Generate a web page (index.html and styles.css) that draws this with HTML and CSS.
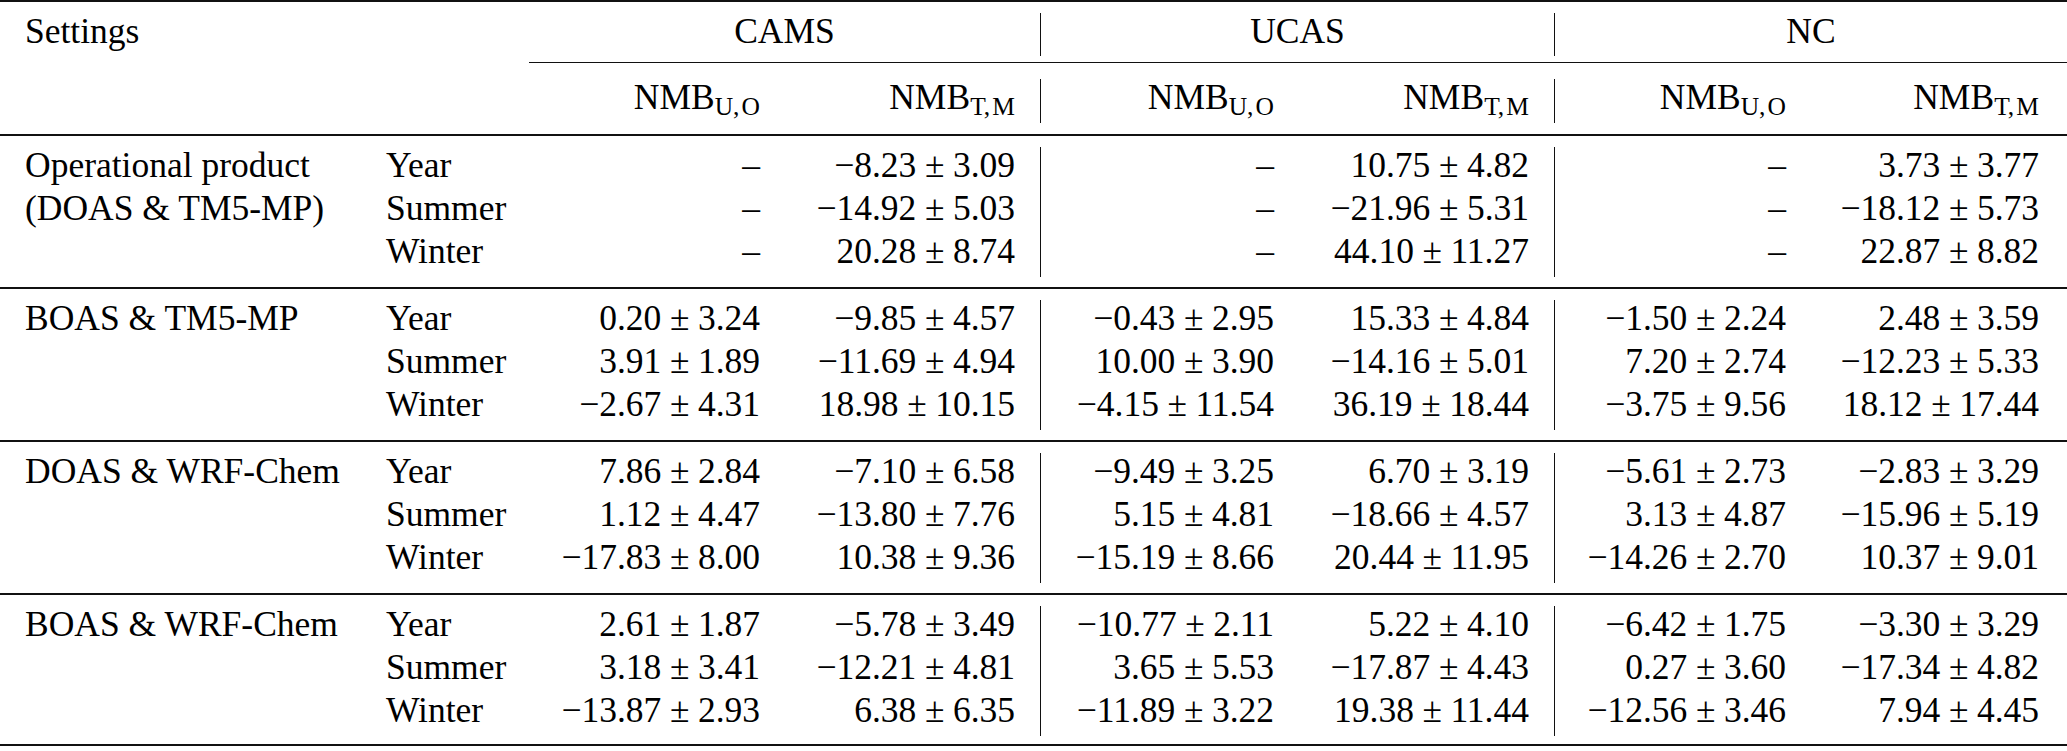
FILE: index.html
```html
<!DOCTYPE html>
<html lang="en">
<head>
<meta charset="utf-8">
<title>NMB table</title>
<link rel="stylesheet" href="styles.css">
</head>
<body>
<div class="tbl">
  <div class="head">
    <div class="grid grp">
      <div class="cell lab">Settings</div>
      <div class="cell"></div>
      <div class="cell span2 ctr vr">CAMS</div>
      <div class="cell span2 ctr vr">UCAS</div>
      <div class="cell span2 ctr">NC</div>
    </div>
    <div class="cmid"></div>
    <div class="grid sub-row rows">
      <div class="cell"></div>
      <div class="cell"></div>
      <div class="cell">NMB<sub>U,&#8202;O</sub></div>
      <div class="cell">NMB<sub>T,&#8202;M</sub></div>
      <div class="cell">NMB<sub>U,&#8202;O</sub></div>
      <div class="cell">NMB<sub>T,&#8202;M</sub></div>
      <div class="cell">NMB<sub>U,&#8202;O</sub></div>
      <div class="cell">NMB<sub>T,&#8202;M</sub></div>
    </div>
  </div>

  <div class="grid sec rows">
    <div class="cell">Operational product</div><div class="cell">Year</div>
    <div class="cell">–</div><div class="cell">−8.23<span class="pm">±</span>3.09</div>
    <div class="cell">–</div><div class="cell">10.75<span class="pm">±</span>4.82</div>
    <div class="cell">–</div><div class="cell">3.73<span class="pm">±</span>3.77</div>

    <div class="cell">(DOAS &amp; TM5-MP)</div><div class="cell">Summer</div>
    <div class="cell">–</div><div class="cell">−14.92<span class="pm">±</span>5.03</div>
    <div class="cell">–</div><div class="cell">−21.96<span class="pm">±</span>5.31</div>
    <div class="cell">–</div><div class="cell">−18.12<span class="pm">±</span>5.73</div>

    <div class="cell"></div><div class="cell">Winter</div>
    <div class="cell">–</div><div class="cell">20.28<span class="pm">±</span>8.74</div>
    <div class="cell">–</div><div class="cell">44.10<span class="pm">±</span>11.27</div>
    <div class="cell">–</div><div class="cell">22.87<span class="pm">±</span>8.82</div>
  </div>

  <div class="grid sec rows">
    <div class="cell">BOAS &amp; TM5-MP</div><div class="cell">Year</div>
    <div class="cell">0.20<span class="pm">±</span>3.24</div><div class="cell">−9.85<span class="pm">±</span>4.57</div>
    <div class="cell">−0.43<span class="pm">±</span>2.95</div><div class="cell">15.33<span class="pm">±</span>4.84</div>
    <div class="cell">−1.50<span class="pm">±</span>2.24</div><div class="cell">2.48<span class="pm">±</span>3.59</div>

    <div class="cell"></div><div class="cell">Summer</div>
    <div class="cell">3.91<span class="pm">±</span>1.89</div><div class="cell">−11.69<span class="pm">±</span>4.94</div>
    <div class="cell">10.00<span class="pm">±</span>3.90</div><div class="cell">−14.16<span class="pm">±</span>5.01</div>
    <div class="cell">7.20<span class="pm">±</span>2.74</div><div class="cell">−12.23<span class="pm">±</span>5.33</div>

    <div class="cell"></div><div class="cell">Winter</div>
    <div class="cell">−2.67<span class="pm">±</span>4.31</div><div class="cell">18.98<span class="pm">±</span>10.15</div>
    <div class="cell">−4.15<span class="pm">±</span>11.54</div><div class="cell">36.19<span class="pm">±</span>18.44</div>
    <div class="cell">−3.75<span class="pm">±</span>9.56</div><div class="cell">18.12<span class="pm">±</span>17.44</div>
  </div>

  <div class="grid sec rows">
    <div class="cell">DOAS &amp; WRF-Chem</div><div class="cell">Year</div>
    <div class="cell">7.86<span class="pm">±</span>2.84</div><div class="cell">−7.10<span class="pm">±</span>6.58</div>
    <div class="cell">−9.49<span class="pm">±</span>3.25</div><div class="cell">6.70<span class="pm">±</span>3.19</div>
    <div class="cell">−5.61<span class="pm">±</span>2.73</div><div class="cell">−2.83<span class="pm">±</span>3.29</div>

    <div class="cell"></div><div class="cell">Summer</div>
    <div class="cell">1.12<span class="pm">±</span>4.47</div><div class="cell">−13.80<span class="pm">±</span>7.76</div>
    <div class="cell">5.15<span class="pm">±</span>4.81</div><div class="cell">−18.66<span class="pm">±</span>4.57</div>
    <div class="cell">3.13<span class="pm">±</span>4.87</div><div class="cell">−15.96<span class="pm">±</span>5.19</div>

    <div class="cell"></div><div class="cell">Winter</div>
    <div class="cell">−17.83<span class="pm">±</span>8.00</div><div class="cell">10.38<span class="pm">±</span>9.36</div>
    <div class="cell">−15.19<span class="pm">±</span>8.66</div><div class="cell">20.44<span class="pm">±</span>11.95</div>
    <div class="cell">−14.26<span class="pm">±</span>2.70</div><div class="cell">10.37<span class="pm">±</span>9.01</div>
  </div>

  <div class="grid sec rows last">
    <div class="cell">BOAS &amp; WRF-Chem</div><div class="cell">Year</div>
    <div class="cell">2.61<span class="pm">±</span>1.87</div><div class="cell">−5.78<span class="pm">±</span>3.49</div>
    <div class="cell">−10.77<span class="pm">±</span>2.11</div><div class="cell">5.22<span class="pm">±</span>4.10</div>
    <div class="cell">−6.42<span class="pm">±</span>1.75</div><div class="cell">−3.30<span class="pm">±</span>3.29</div>

    <div class="cell"></div><div class="cell">Summer</div>
    <div class="cell">3.18<span class="pm">±</span>3.41</div><div class="cell">−12.21<span class="pm">±</span>4.81</div>
    <div class="cell">3.65<span class="pm">±</span>5.53</div><div class="cell">−17.87<span class="pm">±</span>4.43</div>
    <div class="cell">0.27<span class="pm">±</span>3.60</div><div class="cell">−17.34<span class="pm">±</span>4.82</div>

    <div class="cell"></div><div class="cell">Winter</div>
    <div class="cell">−13.87<span class="pm">±</span>2.93</div><div class="cell">6.38<span class="pm">±</span>6.35</div>
    <div class="cell">−11.89<span class="pm">±</span>3.22</div><div class="cell">19.38<span class="pm">±</span>11.44</div>
    <div class="cell">−12.56<span class="pm">±</span>3.46</div><div class="cell">7.94<span class="pm">±</span>4.45</div>
  </div>
</div>
</body>
</html>
```

FILE: styles.css
```css
html, body {
  margin: 0;
  padding: 0;
  background: #ffffff;
}

body {
  font-family: "Liberation Serif", "Times New Roman", serif;
  font-size: 35.5px;
  color: #000000;
}

.tbl {
  width: 2067px;
  border-top: 2px solid #111111;
}

.grid {
  display: grid;
  grid-template-columns: 365px 164px 252px 260px 254px 260px 251px 261px;
}

.cell {
  box-sizing: border-box;
  height: 43.33px;
  line-height: 36px;
  white-space: nowrap;
}

/* header */
.grp {
  padding: 11px 0 6px;
}

.grp .lab {
  padding-left: 25px;
}

.span2 {
  grid-column: span 2;
}

.ctr {
  text-align: center;
}

.vr {
  border-right: 1px solid #111111;
}

.cmid {
  margin-left: 529px;
  border-top: 1px solid #111111;
}

.sub-row {
  padding: 16px 0 11px;
  border-bottom: 2px solid #111111;
}

sub {
  font-size: 25.5px;
  line-height: 0;
  vertical-align: -6px;
}

/* body sections */
.sec {
  padding: 11px 0 10px;
  border-bottom: 2px solid #111111;
}

.sec.last {
  padding-bottom: 8px;
}

.rows .cell:nth-child(8n+1) {
  padding-left: 25px;
}

.rows .cell:nth-child(8n+2) {
  padding-left: 21px;
}

.rows .cell:nth-child(8n+3),
.rows .cell:nth-child(8n+4),
.rows .cell:nth-child(8n+5),
.rows .cell:nth-child(8n+6),
.rows .cell:nth-child(8n+7),
.rows .cell:nth-child(8n) {
  text-align: right;
}

.rows .cell:nth-child(8n+3) {
  padding-right: 21px;
}

.rows .cell:nth-child(8n+4) {
  padding-right: 25px;
  border-right: 1px solid #111111;
}

.rows .cell:nth-child(8n+5) {
  padding-right: 21px;
}

.rows .cell:nth-child(8n+6) {
  padding-right: 25px;
  border-right: 1px solid #111111;
}

.rows .cell:nth-child(8n+7) {
  padding-right: 20px;
}

.rows .cell:nth-child(8n) {
  padding-right: 28px;
}

.pm {
  margin: 0 0.24em;
}
```
